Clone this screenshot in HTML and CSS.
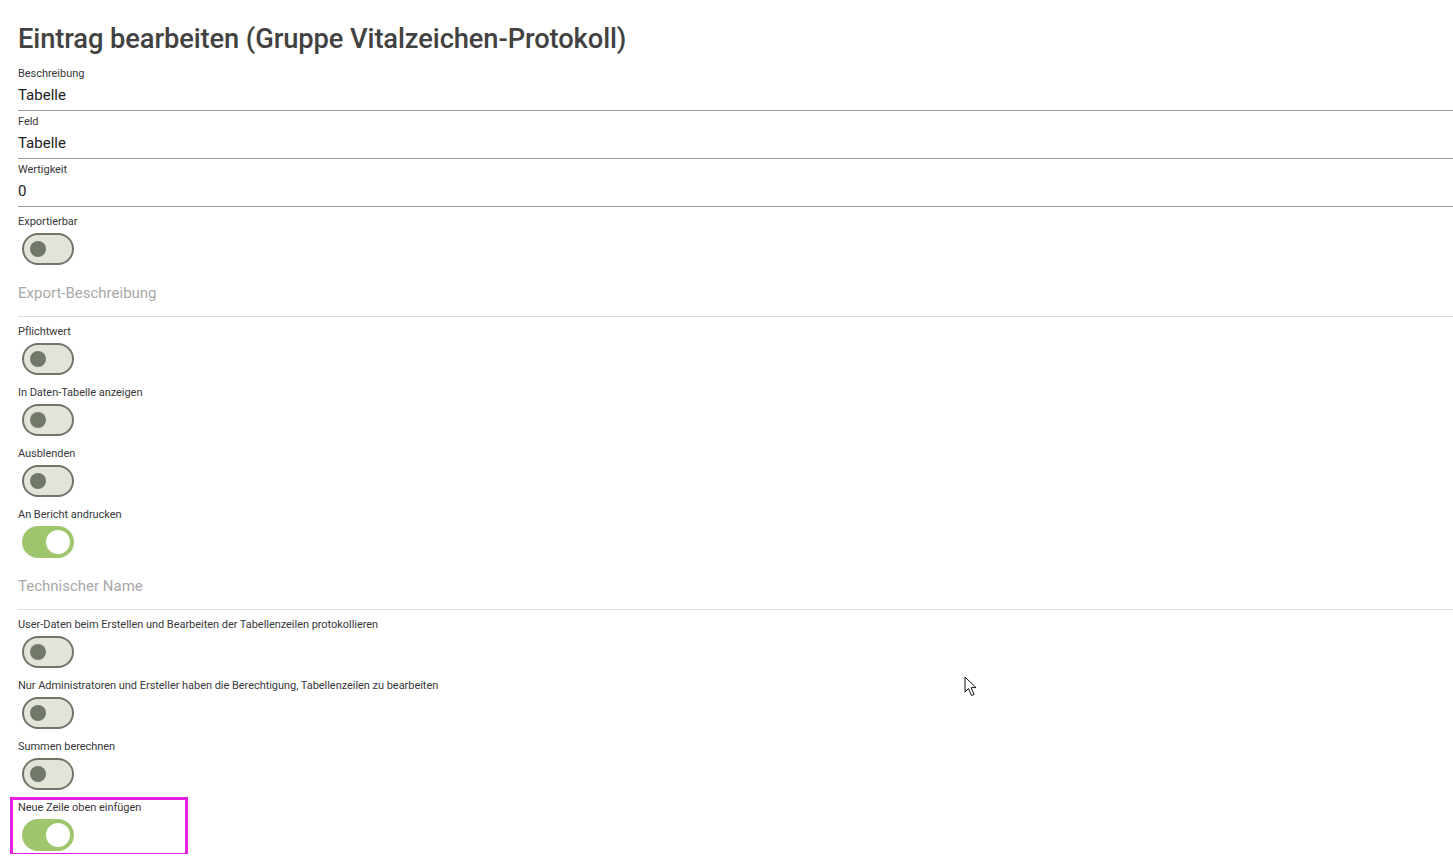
FILE: index.html
```html
<!DOCTYPE html>
<html lang="de">
<head>
  <meta charset="UTF-8" />
  <meta name="viewport" content="width=device-width, initial-scale=1.0" />
  <title>Eintrag bearbeiten</title>
  <link rel="stylesheet" href="styles.css">
</head>
<body>
  <div class="formular">
    <h1>Eintrag bearbeiten (Gruppe Vitalzeichen-Protokoll)</h1>

    <div class="feld">
      <div class="feld-label">Beschreibung</div>
      <div class="feld-wert">Tabelle</div>
    </div>
    <div class="feld">
      <div class="feld-label">Feld</div>
      <div class="feld-wert">Tabelle</div>
    </div>
    <div class="feld">
      <div class="feld-label">Wertigkeit</div>
      <div class="feld-wert">0</div>
    </div>

    <div class="schalter-feld">
      <div class="feld-label">Exportierbar</div>
      <div class="schalter"></div>
    </div>

    <div class="feld leer">
      <div class="feld-wert platzhalter">Export-Beschreibung</div>
    </div>

    <div class="schalter-feld">
      <div class="feld-label">Pflichtwert</div>
      <div class="schalter"></div>
    </div>
    <div class="schalter-feld">
      <div class="feld-label">In Daten-Tabelle anzeigen</div>
      <div class="schalter"></div>
    </div>
    <div class="schalter-feld">
      <div class="feld-label">Ausblenden</div>
      <div class="schalter"></div>
    </div>
    <div class="schalter-feld">
      <div class="feld-label">An Bericht andrucken</div>
      <div class="schalter an"></div>
    </div>

    <div class="feld leer">
      <div class="feld-wert platzhalter">Technischer Name</div>
    </div>

    <div class="schalter-feld">
      <div class="feld-label">User-Daten beim Erstellen und Bearbeiten der Tabellenzeilen protokollieren</div>
      <div class="schalter"></div>
    </div>
    <div class="schalter-feld">
      <div class="feld-label">Nur Administratoren und Ersteller haben die Berechtigung, Tabellenzeilen zu bearbeiten</div>
      <div class="schalter"></div>
    </div>
    <div class="schalter-feld">
      <div class="feld-label">Summen berechnen</div>
      <div class="schalter"></div>
    </div>
    <div class="schalter-feld markiert">
      <div class="feld-label">Neue Zeile oben einfügen</div>
      <div class="schalter an"></div>
    </div>
  </div>

  <!-- Mauszeiger -->
  <svg class="zeiger" width="14" height="22" viewBox="0 0 14 22">
    <path d="M1 1 L1 16 L4.5 12.5 L7.5 19.5 L10 18.4 L7.2 11.6 L12 11.6 Z" fill="#fff" stroke="#111" stroke-width="1" stroke-linejoin="round"/>
  </svg>
</body>
</html>
```

FILE: styles.css
```css
body {
  margin: 0;
  font-family: Roboto, "Noto Sans", sans-serif;
  background: #fff;
  color: #333;
}
.formular {
  padding: 23px 0 0 18px;
}
h1 {
  margin: 0 0 8px 0;
  font-size: 27.3px;
  line-height: 32px;
  font-weight: 500;
  color: #424242;
  letter-spacing: -0.1px;
}
.feld {
  border-bottom: 1px solid #9e9e9e;
  padding: 4px 0 3px 0;
}
.feld-label {
  font-size: 11px;
  line-height: 14px;
  color: #383838;
  letter-spacing: -0.04px;
}
.feld-wert {
  margin-top: 2px;
  font-size: 15px;
  line-height: 24px;
  color: #222;
}
.feld.leer {
  border-bottom-color: #dcdcdc;
  padding: 13px 0 11px 0;
}
.feld.leer .feld-wert {
  margin-top: 0;
}
.platzhalter {
  color: #a8a8a8;
}
.schalter-feld {
  padding: 4px 0 3px 0;
  position: relative;
}
.schalter-feld .feld-label {
  margin: 4px 0 4px 0;
}
.schalter {
  width: 52px;
  height: 32px;
  box-sizing: border-box;
  margin-left: 4px;
  border-radius: 16px;
  border: 2px solid #72766a;
  background: #e2e3d9;
  display: flex;
  align-items: center;
  padding-left: 6px;
}
.schalter::before {
  content: "";
  width: 16px;
  height: 16px;
  border-radius: 50%;
  background: #72786a;
}
.schalter.an {
  border-color: #9fc66c;
  background: #9fc66c;
  justify-content: flex-end;
  padding: 0 2px 0 0;
}
.schalter.an::before {
  width: 24px;
  height: 24px;
  background: #fff;
}
.markiert::after {
  content: "";
  position: absolute;
  left: -8px;
  top: 4px;
  width: 178px;
  height: 59px;
  box-sizing: border-box;
  border: 3px solid #e61ee6;
}
.zeiger {
  position: absolute;
  left: 964px;
  top: 676px;
}
```
